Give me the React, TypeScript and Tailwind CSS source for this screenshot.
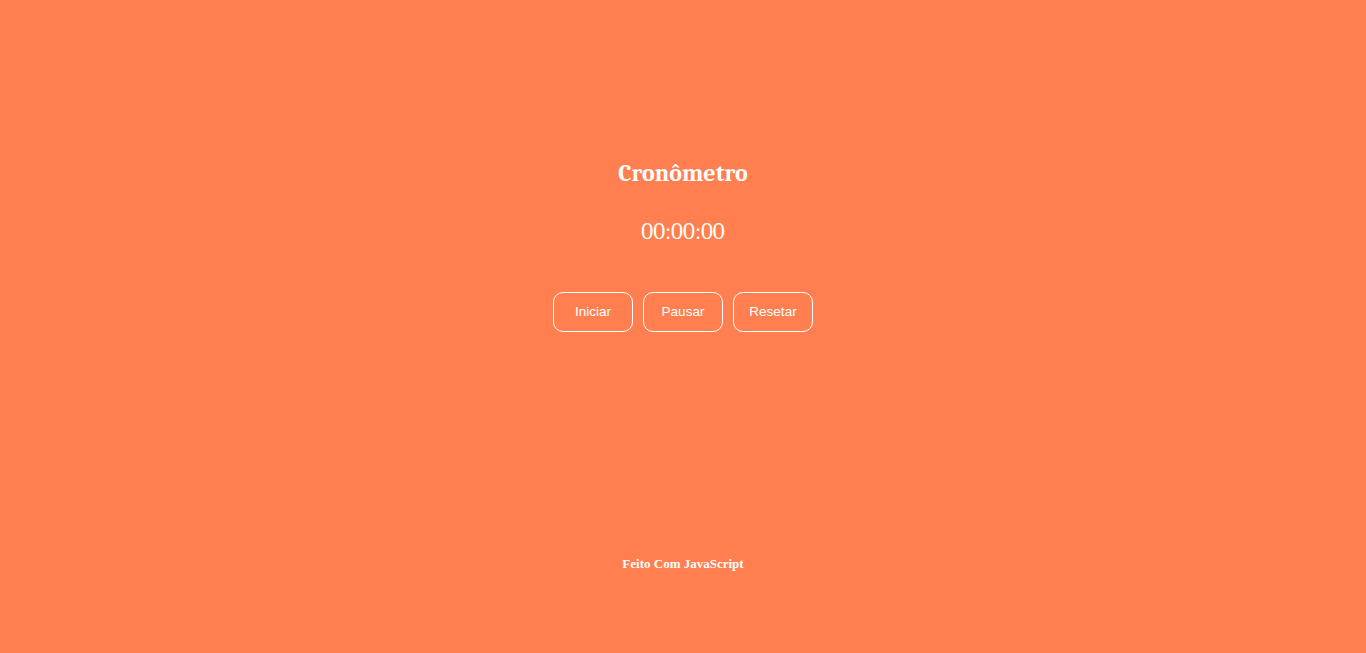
export default function App() {
  const buttons = ["Iniciar", "Pausar", "Resetar"];

  return (
    <div className="min-h-[653px] w-full bg-[#ff7f50] text-white flex flex-col items-center">
      <main className="flex flex-col items-center pt-[158px]">
        <h1 className="text-[24px] leading-[30px] font-bold font-['Cambria','DejaVu_Serif',serif]">
          Cronômetro
        </h1>
        <div className="mt-[30px] text-[23px] leading-[28px] font-['Cambria','DejaVu_Serif',serif]">
          00:00:00
        </div>
        <div className="mt-[46px] flex gap-[10px]">
          {buttons.map((label) => (
            <button
              key={label}
              className="w-[80px] h-[40px] rounded-[10px] border border-white bg-transparent text-white text-[13.5px] font-medium font-['Liberation_Sans',Arial,sans-serif]"
            >
              {label}
            </button>
          ))}
        </div>
      </main>

      <footer className="mt-[222px] text-[13px] font-bold font-['Liberation_Serif','Times_New_Roman',serif]">
        Feito Com JavaScript
      </footer>
    </div>
  );
}
